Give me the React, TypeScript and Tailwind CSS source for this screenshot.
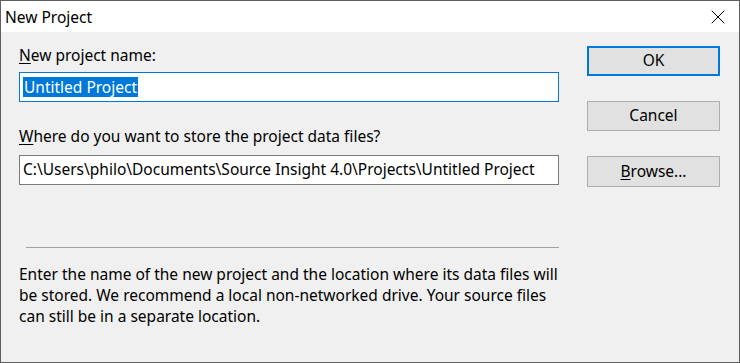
import { X } from 'lucide-react'

const font = { fontFamily: '"Noto Sans", "Open Sans", sans-serif' }

export default function App() {
  return (
    <div
      className="w-[740px] h-[363px] border border-[#5f5f5f] bg-[#f0f0f0] flex flex-col text-[15.5px] text-black overflow-hidden"
      style={font}
    >
      <div className="h-[31px] bg-white flex items-center justify-between pl-[4px] pr-[9px] shrink-0">
        <span className="leading-[20px]">New Project</span>
        <X className="w-[24px] h-[24px]" strokeWidth={1} />
      </div>

      <div className="flex">
        <div className="w-[540px] ml-[18px] flex flex-col">
          <div className="mt-[13px] h-[20px] leading-[20px]">
            <span className="underline underline-offset-2">N</span>ew project name:
          </div>
          <div className="mt-[7px] h-[30px] bg-white border border-[#0078d7] flex items-center px-[3px]">
            <span className="bg-[#0078d7] text-white leading-[20px] px-[1px]">Untitled Project</span>
          </div>
          <div className="mt-[24px] h-[20px] leading-[20px]">
            <span className="underline underline-offset-2">W</span>here do you want to store the project data files?
          </div>
          <div className="mt-[9px] h-[30px] bg-white border border-[#7a7a7a] flex items-center px-[3px] whitespace-nowrap">
            C:\Users\philo\Documents\Source Insight 4.0\Projects\Untitled Project
          </div>
          <div className="mt-[62px] ml-[7px] h-px bg-[#a0a0a0]" />
          <p className="mt-[16px] leading-[21px] whitespace-nowrap">
            Enter the name of the new project and the location where its data files will
            <br />
            be stored. We recommend a local non-networked drive. Your source files
            <br />
            can still be in a separate location.
          </p>
        </div>

        <div className="ml-[28px] w-[133px] flex flex-col">
          <button className="mt-[14px] h-[30px] bg-[#e1e1e1] border-2 border-[#0078d7]">OK</button>
          <button className="mt-[25px] h-[30px] bg-[#e1e1e1] border border-[#adadad]">Cancel</button>
          <button className="mt-[25px] h-[31px] bg-[#e1e1e1] border border-[#adadad]">
            <span className="underline underline-offset-2">B</span>rowse...
          </button>
        </div>
      </div>
    </div>
  )
}
